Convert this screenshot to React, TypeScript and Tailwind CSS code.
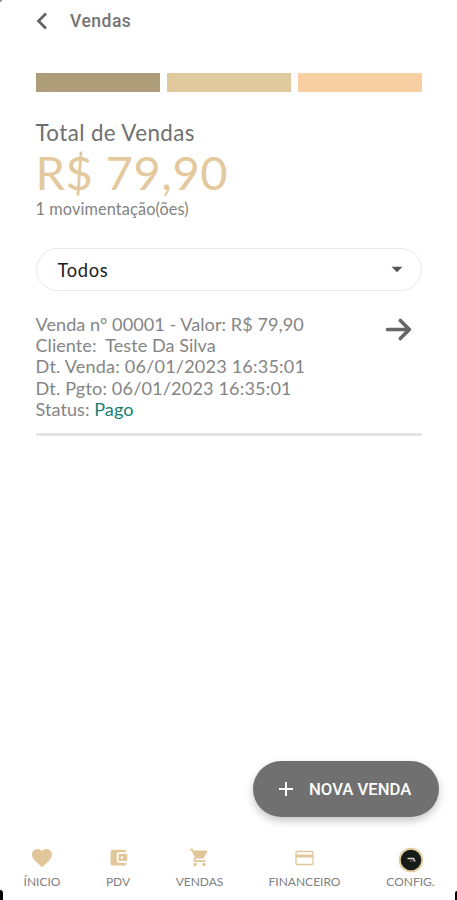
import type { ReactNode } from 'react';
import { FaArrowRight } from 'react-icons/fa6';
import { MdAccountBalanceWallet, MdAdd, MdArrowDropDown, MdFavorite, MdShoppingCart } from 'react-icons/md';
import { clsx } from 'clsx';

const sale = [
  { label: 'Venda nº 00001 - Valor: R$ 79,90', tracking: 'tracking-[0.05px]' },
  { label: 'Cliente:  Teste Da Silva', tracking: 'tracking-[0.03px]' },
  { label: 'Dt. Venda: 06/01/2023 16:35:01', tracking: 'tracking-[0.18px]' },
  { label: 'Dt. Pgto: 06/01/2023 16:35:01', tracking: 'tracking-[0.15px]' },
];

function Header() {
  return (
    <header className="flex h-[41px] items-center pl-9">
      <svg className="h-[18px] w-3" viewBox="0 0 12 18" fill="none" stroke="#606060" strokeWidth="2.6">
        <path d="M10 1.5 2.5 9l7.5 7.5" />
      </svg>
      <h1 className="ml-[22px] pt-px font-['Roboto'] text-[17.5px] font-medium tracking-[0.5px] text-[#747474]">Vendas</h1>
    </header>
  );
}

function Summary() {
  return (
    <section className="mt-[26px] flex h-[103px] flex-col">
      <h2 className="h-[29px] text-[22.4px] leading-[29px] tracking-[0.38px] text-[#707070]">Total de Vendas</h2>
      <p className="h-[49px] text-[47px] leading-[50px] tracking-[0.5px] text-[#e3c99d]">R$ 79,90</p>
      <p className="text-[16.3px] leading-[26px] tracking-[0.12px] text-[#828282]">1 movimentação(ões)</p>
    </section>
  );
}

function SaleItem() {
  return (
    <article className="mt-[23px] flex h-[122px] justify-between border-b-[3px] border-[#e5e5e5]">
      <div className="text-[18.1px] leading-[21.2px] text-[#858585]">
        {sale.map((line) => (
          <p key={line.label} className={clsx('whitespace-pre', line.tracking)}>
            {line.label}
          </p>
        ))}
        <p className="tracking-[0.05px]">
          Status: <span className="text-[#168073]">Pago</span>
        </p>
      </div>
      <FaArrowRight className="mt-[1px] mr-[9px] size-[29px] text-[#666]" />
    </article>
  );
}

function NavItem({ label, className, children }: { label: string; className: string; children: ReactNode }) {
  return (
    <div className={clsx('flex flex-col items-center text-[#e1c699]', className)}>
      <div className="flex h-[27px] items-center">{children}</div>
      <span className="text-[12px] leading-[22px] whitespace-nowrap text-[#808080]">{label}</span>
    </div>
  );
}

export default function App() {
  return (
    <div className="relative flex h-[900px] w-[457px] flex-col overflow-hidden bg-white font-['Lato',sans-serif]">
      <Header />
      <main className="flex flex-1 flex-col px-[35.5px] pt-8">
        <div className="flex gap-[7px]">
          <div className="h-[19px] flex-1 bg-[#ad9d78]" />
          <div className="h-[19px] flex-1 bg-[#e1c99e]" />
          <div className="h-[19px] flex-1 bg-[#f8cfa2]" />
        </div>
        <Summary />
        <button className="mt-[27px] flex h-[43px] w-full items-center justify-between rounded-full border-[1.5px] border-[#e8e8e8] pr-[11px] pl-[21px] text-[18.3px] tracking-[0.7px] text-[#202020]">
          <span className="pt-[2px]">Todos</span>
          <MdArrowDropDown className="mb-[1px] size-[26px] text-[#555]" />
        </button>
        <SaleItem />
      </main>

      <button className="mr-[18px] mb-[27px] flex h-[56px] w-[186px] items-center self-end rounded-full bg-[#707070] pl-[21px] font-['Roboto'] text-[16.7px] font-medium whitespace-nowrap text-white shadow-[0_4px_8px_rgba(0,0,0,0.22)]">
        <MdAdd className="mr-[11px] size-6" />
        <span className="pt-[2px]">NOVA VENDA</span>
      </button>

      <nav className="flex h-[56px] shrink-0">
        <NavItem label="ÍNICIO" className="w-[84px]">
          <MdFavorite className="size-[24px]" />
        </NavItem>
        <NavItem label="PDV" className="w-[68px]">
          <MdAccountBalanceWallet className="size-[21px]" />
        </NavItem>
        <NavItem label="VENDAS" className="w-[95px]">
          <MdShoppingCart className="size-[21px]" />
        </NavItem>
        <NavItem label="FINANCEIRO" className="w-[115px]">
          <svg className="h-[16px] w-[19px]" viewBox="0 0 19 16" fill="none" stroke="currentColor" strokeWidth="1.3">
            <rect x="1" y="1.5" width="17" height="13" rx="1.2" />
            <path d="M1 6h17" strokeWidth="3" />
          </svg>
        </NavItem>
        <NavItem label="CONFIG." className="w-[95px] pl-[2px]">
          <svg className="mt-1 size-[26px]" viewBox="0 0 26 26">
            <circle cx="13" cy="13" r="11.3" fill="#171b17" stroke="#e4cca0" strokeWidth="2" />
            <path d="M9.5 11.5h6l1.5 3" fill="none" stroke="#d8d4ce" strokeWidth="1.5" />
            <path d="M12 14h3" stroke="#a66f62" />
          </svg>
        </NavItem>
      </nav>

      {/* Dark edges of the rounded device frame */}
      <div className="absolute bottom-0 left-0 h-[10px] w-[3px] rounded-tr-full bg-black" />
      <div className="absolute right-0 bottom-0 h-[9px] w-[2px] rounded-tl-full bg-black" />
      <div className="absolute top-0 left-0 h-[2px] w-[2px] rounded-br-full bg-[#888]" />
    </div>
  );
}
